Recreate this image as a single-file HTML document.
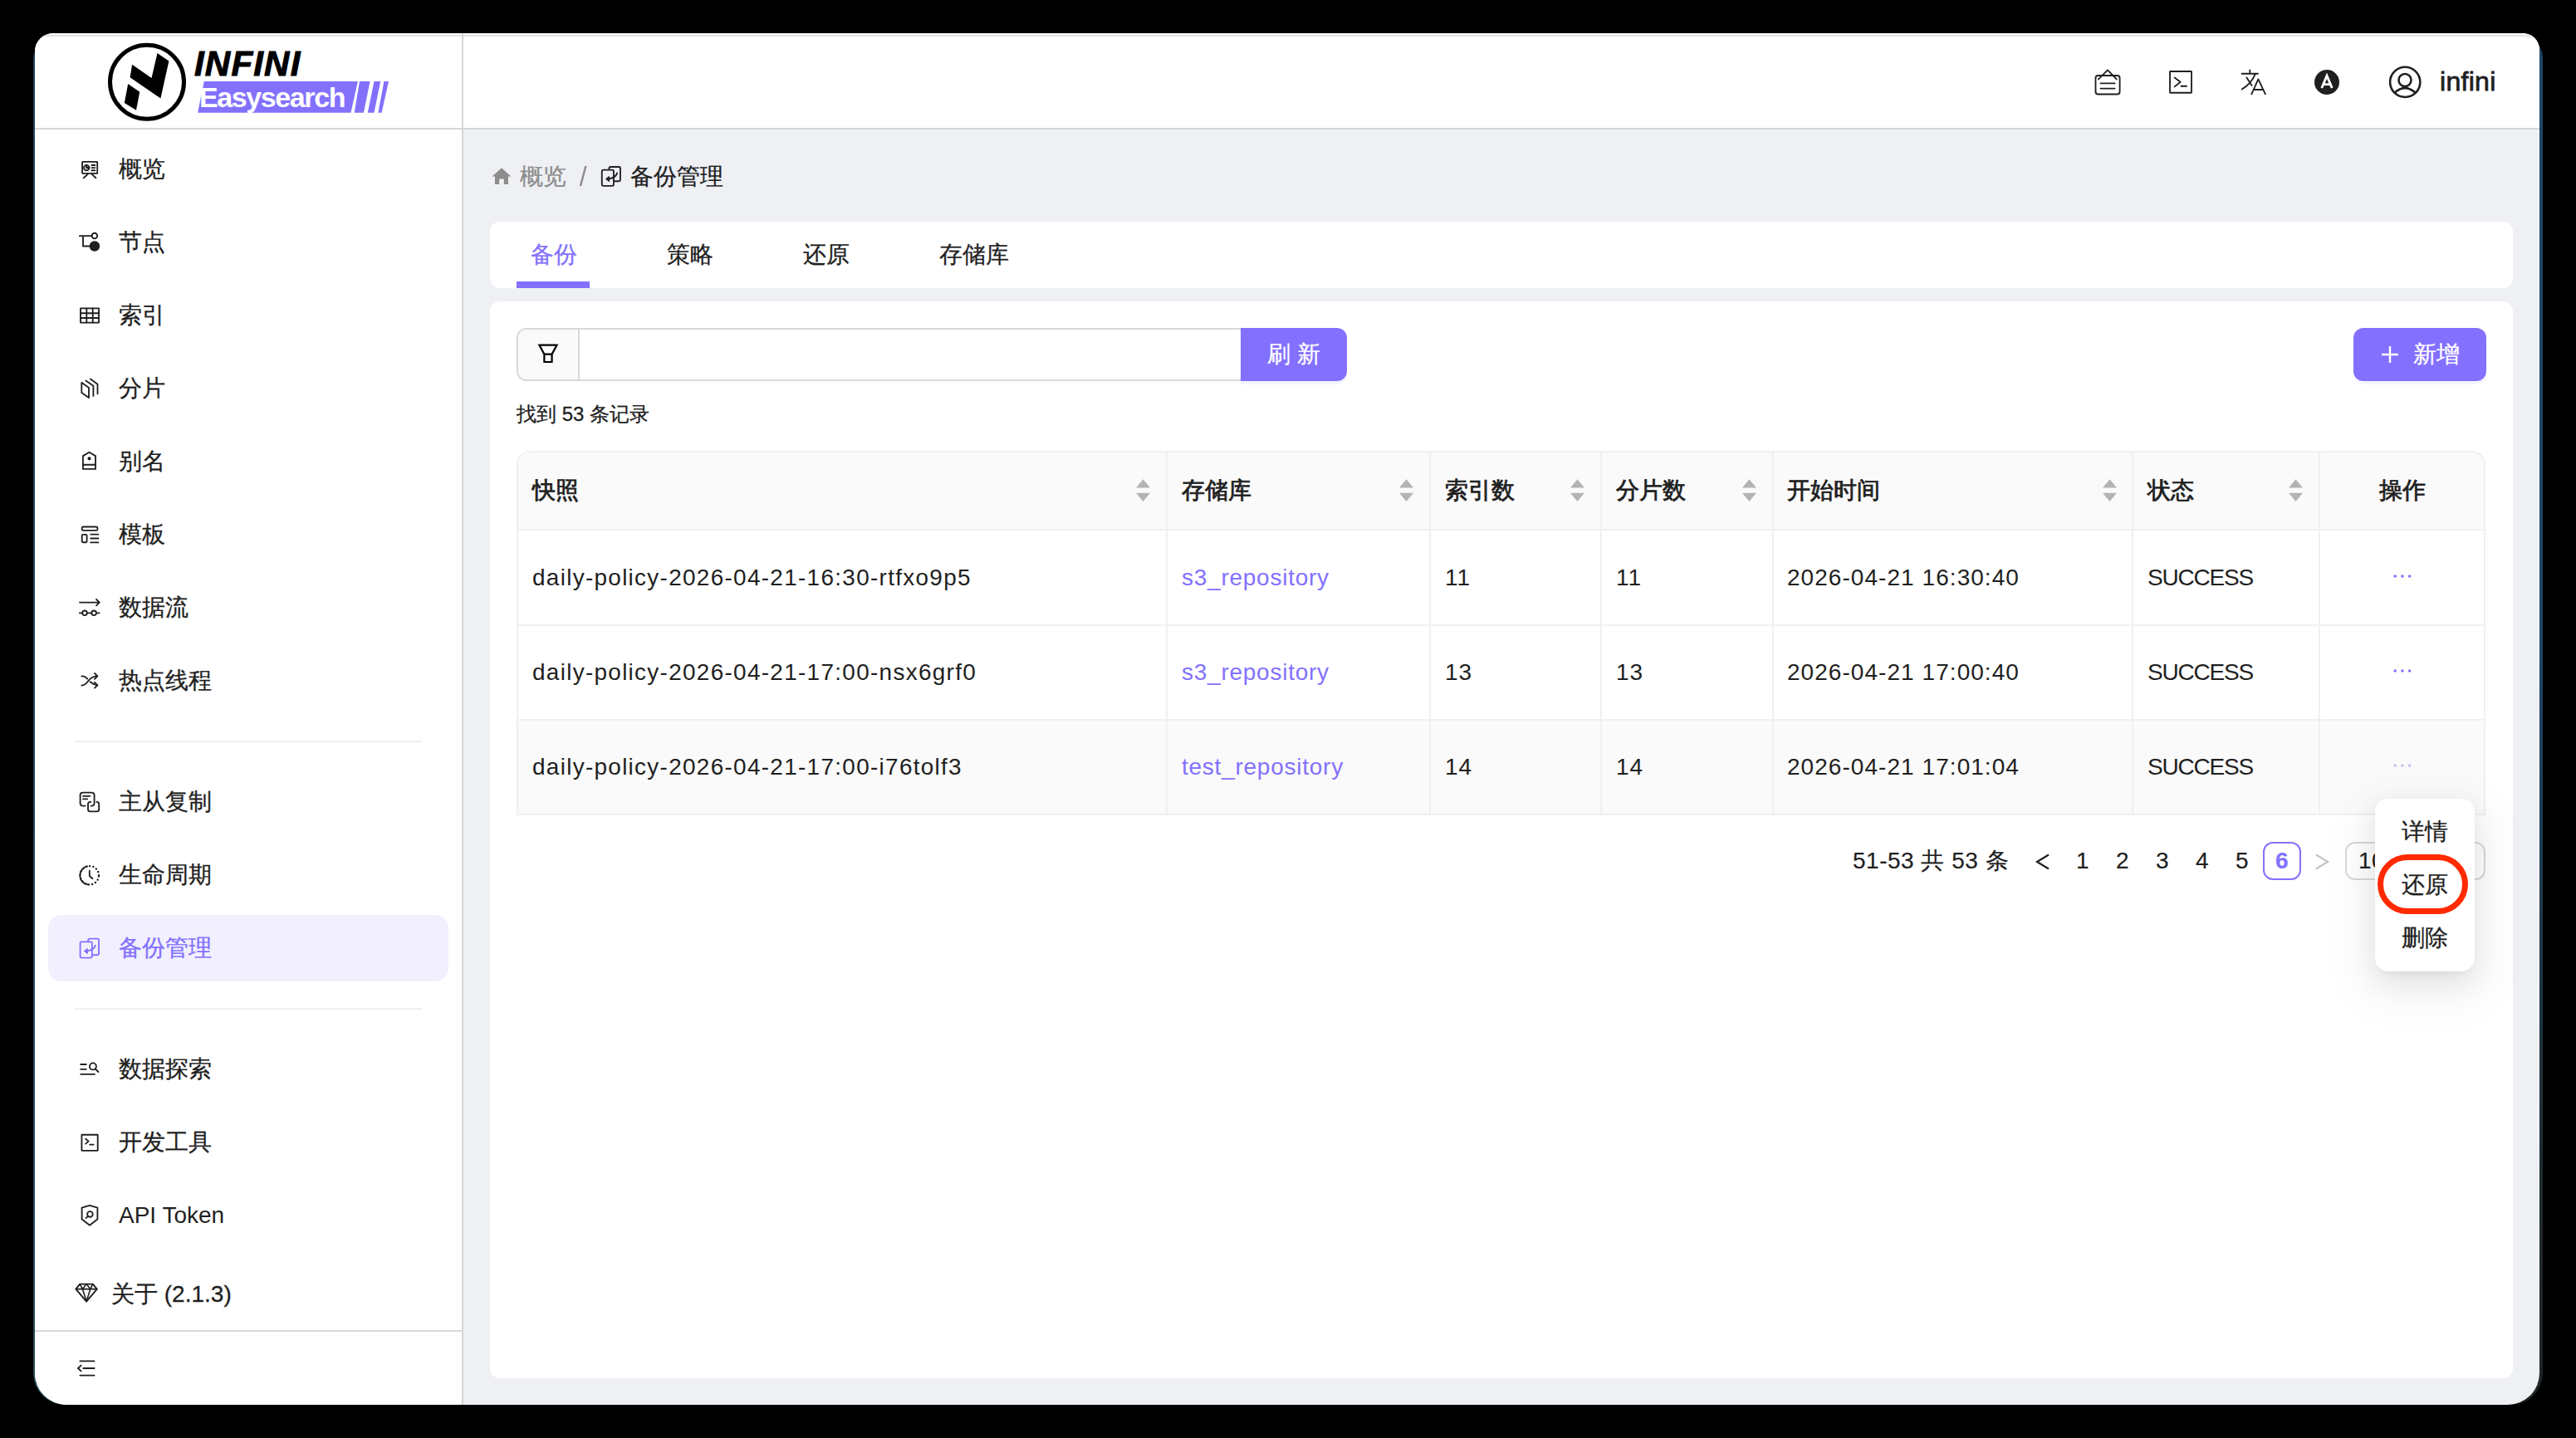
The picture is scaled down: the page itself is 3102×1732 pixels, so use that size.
<!DOCTYPE html>
<html><head><meta charset="utf-8">
<style>
html,body{margin:0;padding:0;}
body{width:3102px;height:1732px;background:#000;position:relative;overflow:hidden;font-family:"Liberation Sans",sans-serif;color:#1f1f1f;}
.a{position:absolute;}
.t{position:absolute;white-space:nowrap;line-height:40px;font-size:28px;-webkit-text-stroke:0.3px currentColor;}
#win{left:0;top:0;width:3102px;height:1732px;clip-path:inset(40px 44px 40px 42px round 22px 20px 38px 38px);background:#eef0f4;}
.ic{position:absolute;overflow:visible;}
.hd{font-weight:normal;}
.c0{letter-spacing:1.26px;}
.c1{letter-spacing:0.75px;}
.c2,.c3{letter-spacing:1px;}
.c4{letter-spacing:1.05px;}
.c5{letter-spacing:-1.2px;}
.c0,.c1,.c2,.c3,.c4,.c5{-webkit-text-stroke:0;}
.hd{-webkit-text-stroke:0.8px currentColor;}
.pg{letter-spacing:0.5px;-webkit-text-stroke:0.2px currentColor;}
.ic *{fill:none;stroke:#1f1f1f;stroke-width:1.85;stroke-linecap:round;stroke-linejoin:round;}
</style></head>
<body>
<div class="a" style="left:0;top:0;width:3102px;height:1732px;clip-path:inset(46px 46px 40px 40px round 26px 20px 38px 38px);background:linear-gradient(#1f4565 0%,#1f4565 55%,#24505a 100%);"></div><div class="a" style="left:0;top:0;width:3102px;height:1732px;clip-path:inset(44px 40px 40px 46px round 22px 26px 38px 38px);background:linear-gradient(#1f4565 0%,#1f4565 45%,#1f2a2c 85%,#1f2322 100%);"></div>
<div id="win" class="a">
  <!-- header -->
  <div class="a" style="left:42px;top:40px;width:3016px;height:114px;background:#fff;"></div>
  <div class="a" style="left:42px;top:42px;width:3016px;height:2px;background:#e0e2e1;"></div>
  <div class="a" style="left:42px;top:154px;width:3016px;height:2px;background:#d6d6d6;"></div>
  <!-- sidebar -->
  <div class="a" style="left:42px;top:156px;width:514px;height:1536px;background:#fff;"></div>
  <div class="a" style="left:556px;top:40px;width:2px;height:1652px;background:#d6d6d6;"></div>
  <!-- sidebar items -->
  <div class="a" style="left:58px;top:1102px;width:482px;height:80px;border-radius:16px;background:#f2f0fe;"></div>
  <div class="a" style="left:90px;top:892px;width:418px;height:2px;background:#efefef;"></div>
  <div class="a" style="left:90px;top:1214px;width:418px;height:2px;background:#efefef;"></div>
  <div class="a" style="left:42px;top:1602px;width:514px;height:2px;background:#d9d9d9;"></div>
  <div class="t" style="left:143px;top:184px;">概览</div>
  <div class="t" style="left:143px;top:272px;">节点</div>
  <div class="t" style="left:143px;top:360px;">索引</div>
  <div class="t" style="left:143px;top:448px;">分片</div>
  <div class="t" style="left:143px;top:536px;">别名</div>
  <div class="t" style="left:143px;top:624px;">模板</div>
  <div class="t" style="left:143px;top:712px;">数据流</div>
  <div class="t" style="left:143px;top:800px;">热点线程</div>
  <div class="t" style="left:143px;top:946px;">主从复制</div>
  <div class="t" style="left:143px;top:1034px;">生命周期</div>
  <div class="t" style="left:143px;top:1122px;color:#8371fd;">备份管理</div>
  <div class="t" style="left:143px;top:1268px;">数据探索</div>
  <div class="t" style="left:143px;top:1356px;">开发工具</div>
  <div class="t" style="left:143px;top:1444px;-webkit-text-stroke:0;">API Token</div>
  <div class="t" style="left:134px;top:1539px;">关于 (2.1.3)</div>
  <!-- icons -->
  <svg class="ic" style="left:85px;top:185px" width="50" height="40" viewBox="0 0 50 40">
    <rect x="14.1" y="9.9" width="18.1" height="14" rx="0.5"/>
    <path d="M15.8 29.3L20.6 24.9M25.6 24.9L30.4 29.3M25.4 14h4M25.4 17.1h4M25.4 20.2h4"/>
    <circle cx="19.2" cy="17.1" r="3.2"/><path d="M19.2 13.9v3.2h3.2" style="stroke-width:2.2"/>
  </svg>
  <svg class="ic" style="left:85px;top:272px" width="50" height="40" viewBox="0 0 50 40">
    <path d="M10.8 12.1H25.5M15 12.1V24.5H23"/>
    <circle cx="28.9" cy="12" r="3.3"/>
    <circle cx="28.9" cy="24.5" r="5.3" style="fill:#1f1f1f"/>
  </svg>
  <svg class="ic" style="left:85px;top:360px" width="50" height="40" viewBox="0 0 50 40">
    <rect x="12" y="11.4" width="22" height="17.2"/>
    <path d="M12 17.2H34M12 23H34M19.3 11.4V28.6M26.7 11.4V28.6"/>
  </svg>
  <svg class="ic" style="left:85px;top:448px" width="50" height="40" viewBox="0 0 50 40">
    <path d="M13.3 12.8L22 18.9V31.1L13.3 25Z"/>
    <path d="M18.4 10.6L27.4 16.7V28.9"/>
    <path d="M23.9 8.6L32.5 14.7V26.3"/>
  </svg>
  <svg class="ic" style="left:85px;top:536px" width="50" height="40" viewBox="0 0 50 40">
    <path d="M14.9 13.1L22.4 8.7L30 13.1V28.9H14.9Z"/>
    <path d="M14.9 23.7H30"/>
    <circle cx="22.5" cy="16.3" r="1.2" style="fill:#1f1f1f"/>
  </svg>
  <svg class="ic" style="left:85px;top:624px" width="50" height="40" viewBox="0 0 50 40">
    <rect x="13.7" y="10.5" width="18.7" height="4.4" rx="1.5"/>
    <rect x="13.7" y="19.8" width="5.9" height="9.4" rx="1.2"/>
    <path d="M24.2 19.6H33.4M24.2 24.5H33.4M24.2 29.4H33.4"/>
  </svg>
  <svg class="ic" style="left:85px;top:712px" width="50" height="40" viewBox="0 0 50 40">
    <path d="M11 13.6H34.6M31 9.8L34.8 13.6L31 17.4"/>
    <path d="M10.8 26.3H14.2M19.8 26.3H25.3M30.9 26.3H34.6"/>
    <circle cx="17" cy="26.3" r="2.8"/><circle cx="28.1" cy="26.3" r="2.8"/>
  </svg>
  <svg class="ic" style="left:85px;top:800px" width="50" height="40" viewBox="0 0 50 40">
    <path d="M13.3 14.4C16 14.2 18.6 15.6 20.2 17.6"/>
    <path d="M13.3 25.6C18 25.6 19.6 22.6 21.6 19.8C24 16.4 27 14.6 31.8 14.3"/>
    <path d="M23.6 21.2C25.6 22.8 28 24.6 31.8 25.2"/>
    <path d="M29 11L32.4 14.3L29 17.8M29 21.8L32.4 25.3L29 28.6"/>
  </svg>
  <svg class="ic" style="left:85px;top:946px" width="50" height="40" viewBox="0 0 50 40">
    <path d="M17.6 24.6H14.4A3 3 0 0 1 11.6 21.6V11.6A3 3 0 0 1 14.6 8.6H25.6A3 3 0 0 1 28.6 11.6V21.6A3 3 0 0 1 25.6 24.6H24.6"/>
    <path d="M15 12.8H23.2M15 16.4H20.2"/>
    <path d="M24.4 19.8H23.6A2.6 2.6 0 0 0 21 22.4V28.8A2.6 2.6 0 0 0 23.6 31.4H31.6A2.6 2.6 0 0 0 34.2 28.8V22.4A2.6 2.6 0 0 0 31.6 19.8H31.4"/>
  </svg>
  <svg class="ic" style="left:85px;top:1034px" width="50" height="40" viewBox="0 0 50 40">
    <path d="M20.2 9.4A11.2 11.2 0 0 0 20.4 31.4"/>
    <circle cx="22.8" cy="20.3" r="11.2" style="stroke-dasharray:0.1 4.2;stroke-dashoffset:-35.5;stroke-width:2.4"/>
    <path d="M22.8 14.6V21L26.4 24.3"/>
  </svg>
  <svg class="ic" style="left:85px;top:1122px" width="50" height="40" viewBox="0 0 50 40">
    <path style="stroke:#8371fd" d="M21.2 12.4V10.2A1.6 1.6 0 0 1 22.8 8.6H32.4A1.6 1.6 0 0 1 34 10.2V26.6A1.6 1.6 0 0 1 32.4 28.2H25.8"/>
    <rect style="stroke:#8371fd" x="11.6" y="12.4" width="14.2" height="19.2" rx="1.8"/>
    <path style="stroke:#8371fd" d="M29.8 16.6C28.6 20.4 26.4 22.6 20 23.4"/>
    <path d="M16.6 23.5L20.3 20.8V26.4Z" style="fill:#8371fd;stroke:#8371fd;stroke-width:1.2"/>
  </svg>
  <svg class="ic" style="left:85px;top:1268px" width="50" height="40" viewBox="0 0 50 40">
    <path d="M12.2 14H18.8M12.2 19.8H18.8M12.2 25.8H29"/>
    <circle cx="26.9" cy="16.4" r="4"/><path d="M29.8 19.5L33.4 23"/>
  </svg>
  <svg class="ic" style="left:85px;top:1356px" width="50" height="40" viewBox="0 0 50 40">
    <rect x="13.4" y="10.7" width="19.3" height="19.2" rx="0.4"/>
    <path d="M18.2 15.8L21.6 18.6L18.2 21.6M23.2 22.6H27.6"/>
  </svg>
  <svg class="ic" style="left:85px;top:1444px" width="50" height="40" viewBox="0 0 50 40">
    <path d="M13.6 10.6L23 7.9L32.4 10.6V24.4L23 31.8L13.6 24.4Z"/>
    <circle cx="23.4" cy="18.4" r="3.3"/><path d="M21 20.9L18.6 23.2"/>
  </svg>
  <svg class="ic" style="left:85px;top:1538px" width="50" height="40" viewBox="0 0 50 40">
    <path d="M6.4 14.6L11.2 8.6H26.8L31.8 14.6L19.1 29.6Z"/>
    <path d="M6.4 14.6H31.8M11.2 8.6L14.4 14.6L19.1 29.6L23.8 14.6L26.8 8.6M14.4 14.6L19.1 8.6L23.8 14.6" style="stroke-width:1.6"/>
  </svg>
  <svg class="ic" style="left:85px;top:1628px" width="50" height="40" viewBox="0 0 50 40">
    <path d="M11.4 11.4H28.6M15.4 20H28.6M11.4 28.6H28.6M12.6 16.6L9 20L12.6 23.4"/>
  </svg>
  <!-- logo -->
  <svg class="a" style="left:120px;top:45px" width="370" height="110" viewBox="120 45 370 110">
    <circle cx="177" cy="98.7" r="44.5" fill="none" stroke="#000" stroke-width="5"/>
    <path d="M189.45 63.9L203.4 73.6L193.4 118.6L156.6 93.2L159.1 77.8L182.5 93.9Z" fill="#000"/>
    <path d="M154.2 100.9L168.2 110.7L164 132.8L149.8 124Z" fill="#000"/>
    <path d="M245.8 98.1H430.9L422.5 135.8H238.1Z" fill="#8371fd"/>
    <path d="M433 98.1H445.6L437.9 135.8H426.7Z" fill="#8371fd"/>
    <path d="M450.5 98.1H458.2L450.5 135.8H442.8Z" fill="#8371fd"/>
    <path d="M462.4 98.1H468L459.6 135.8H455.4Z" fill="#8371fd"/>
  </svg>
  <div class="t" id="infini-logo" style="left:234px;top:52px;font-size:42px;line-height:50px;font-weight:bold;font-style:italic;color:#000;letter-spacing:1.2px;-webkit-text-stroke:1px #000;">INFINI</div>
  <div class="t" id="easy-logo" style="left:240px;top:97px;font-size:34px;line-height:40px;font-weight:bold;color:#fff;letter-spacing:-1.4px;-webkit-text-stroke:0;">Easysearch</div>
  <!-- header icons -->
  <svg class="ic" style="left:2500px;top:60px" width="530" height="80" viewBox="2500 60 530 80">
    <rect x="2523.5" y="91" width="29.1" height="22.5" rx="3"/>
    <path d="M2527 95.4L2538 84.4L2548.8 95.4M2529.5 100.4H2546.6M2529.5 106.6H2546.6"/>
    <rect x="2613" y="86" width="26" height="25.7" rx="0.5"/>
    <path d="M2618.7 93.4L2625.6 98.75L2618.7 104.4M2626.5 103.75H2633"/>
    <path d="M2699.7 88.75H2719M2709.3 84.3V88.75M2705.5 93.4L2711.6 103M2715.8 89.2Q2711 101 2699.7 107.5"/>
    <path d="M2711.3 113.3L2719.4 95.4L2727.9 113.3M2714 108H2725"/>
    <circle cx="2802" cy="99" r="15" style="fill:#1f1f1f;stroke:none"/>
    <path d="M2795.8 106L2802 91.2L2808.2 106M2798.2 101.6H2805.8" style="stroke:#fff;stroke-width:2.9;stroke-linecap:butt;stroke-linejoin:miter"/>
    <circle cx="2896.2" cy="98.9" r="18.1" style="stroke-width:2.6"/>
    <circle cx="2896" cy="96.5" r="7.5" style="stroke-width:2.6"/>
    <path d="M2883.6 111.6Q2896 100.5 2908.6 111.6" style="stroke-width:2.6"/>
  </svg>
  <div class="t" style="left:2938px;top:78px;font-size:32px;line-height:40px;letter-spacing:0.3px;-webkit-text-stroke:0.8px #1f1f1f;color:#1f1f1f;">infini</div>
  <!-- breadcrumb -->
  <svg class="a" style="left:588px;top:196px" width="32" height="32" viewBox="588 196 32 32">
    <path d="M604 202.2L615.4 212.6H612V222H606.8V215.6H601.2V222H596V212.6H592.6Z" fill="#8c8c8c"/>
  </svg>
  <div class="t" style="left:626px;top:193px;color:#8c8c8c;">概览</div>
  <svg class="a" style="left:690px;top:195px" width="24" height="34" viewBox="690 195 24 34"><path d="M705.4 200L699 224" stroke="#8c8c8c" stroke-width="2.4" fill="none"/></svg>
  <svg class="ic" style="left:718px;top:196px" width="36" height="34" viewBox="718 196 36 34">
    <path d="M733.5 204V202.6A1.6 1.6 0 0 1 735.1 201H745.4A1.6 1.6 0 0 1 747 202.6V216.6A1.6 1.6 0 0 1 745.4 218.2H739.4"/>
    <rect x="724.8" y="204.6" width="14.2" height="19.2" rx="1.8"/>
    <path d="M743.2 208.4C742 212.2 739.8 214.6 733.2 215.4"/>
    <path d="M729.8 215.5L733.5 212.8V218.4Z" style="fill:#1f1f1f;stroke-width:1.2"/>
  </svg>
  <div class="t" style="left:759px;top:193px;">备份管理</div>
  <!-- tabs card -->
  <div class="a" style="left:590px;top:267px;width:2436px;height:80px;border-radius:12px;background:#fff;"></div>
  <div class="t" style="left:639px;top:287px;color:#8371fd;">备份</div>
  <div class="t" style="left:803px;top:287px;">策略</div>
  <div class="t" style="left:967px;top:287px;">还原</div>
  <div class="t" style="left:1131px;top:287px;">存储库</div>
  <div class="a" style="left:622px;top:339px;width:88px;height:8px;background:#8371fd;"></div>
  <!-- main card -->
  <div class="a" style="left:590px;top:363px;width:2436px;height:1297px;border-radius:12px;background:#fff;"></div>
  <!-- search group -->
  <div class="a" style="left:622px;top:395px;width:872px;height:64px;box-sizing:border-box;border:2px solid #d9d9d9;border-right:none;border-radius:12px 0 0 12px;background:#fff;"></div>
  <div class="a" style="left:624px;top:397px;width:72px;height:60px;border-radius:10px 0 0 10px;background:#fafafa;"></div>
  <div class="a" style="left:696px;top:397px;width:2px;height:60px;background:#d9d9d9;"></div>
  <svg class="ic" style="left:640px;top:405px" width="40" height="40" viewBox="640 405 40 40">
    <path d="M649.4 415.6H670.6L664.6 426.6V436H655.4V426.6ZM655.4 426.6H664.6" style="stroke:#000;stroke-width:2.2;stroke-linejoin:miter;stroke-linecap:butt"/>
  </svg>
  <div class="a" style="left:1494px;top:395px;width:128px;height:64px;border-radius:0 12px 12px 0;background:#8470fe;box-shadow:0 4px 0 rgba(131,113,253,0.08);"></div>
  <div class="t" style="left:1526px;top:407px;color:#fff;letter-spacing:8px;">刷新</div>
  <div class="a" style="left:2834px;top:395px;width:160px;height:64px;border-radius:12px;background:#8470fe;box-shadow:0 4px 0 rgba(131,113,253,0.08);"></div>
  <svg class="a" style="left:2860px;top:415px" width="36" height="24" viewBox="2860 415 36 24">
    <path d="M2868 427H2888M2878 417V437" stroke="#fff" stroke-width="2.4" fill="none"/>
  </svg>
  <div class="t" style="left:2906px;top:407px;color:#fff;">新增</div>
  <div class="t" style="left:622px;top:479px;font-size:24px;">找到 53 条记录</div>
  <!-- table -->
  <div class="a" style="left:622px;top:543px;width:2371px;height:437px;box-sizing:border-box;border:2px solid #f0f0f0;border-bottom:none;border-radius:16px 16px 0 0;background:#fff;"></div>
  <div class="a" style="left:624px;top:545px;width:2367px;height:92px;border-radius:14px 14px 0 0;background:#fafafa;"></div>
  <div class="a" style="left:624px;top:866px;width:2367px;height:114px;background:#fafafa;"></div>
  <div class="a" style="left:622px;top:637px;width:2371px;height:2px;background:#f0f0f0;"></div>
  <div class="a" style="left:622px;top:752px;width:2371px;height:2px;background:#f0f0f0;"></div>
  <div class="a" style="left:622px;top:866px;width:2371px;height:2px;background:#f0f0f0;"></div>
  <div class="a" style="left:622px;top:980px;width:2371px;height:2px;background:#f0f0f0;"></div>
  <div class="a" style="left:1404px;top:545px;width:2px;height:435px;background:#f0f0f0;"></div>
  <div class="a" style="left:1721px;top:545px;width:2px;height:435px;background:#f0f0f0;"></div>
  <div class="a" style="left:1927px;top:545px;width:2px;height:435px;background:#f0f0f0;"></div>
  <div class="a" style="left:2134px;top:545px;width:2px;height:435px;background:#f0f0f0;"></div>
  <div class="a" style="left:2567px;top:545px;width:2px;height:435px;background:#f0f0f0;"></div>
  <div class="a" style="left:2792px;top:545px;width:2px;height:435px;background:#f0f0f0;"></div>
  <div class="t hd" style="left:641px;top:571px;">快照</div>
  <div class="t hd" style="left:1423px;top:571px;">存储库</div>
  <div class="t hd" style="left:1740px;top:571px;">索引数</div>
  <div class="t hd" style="left:1946px;top:571px;">分片数</div>
  <div class="t hd" style="left:2152px;top:571px;">开始时间</div>
  <div class="t hd" style="left:2586px;top:571px;">状态</div>
  <div class="t hd" style="left:2865px;top:571px;">操作</div>
  <svg class="a" style="left:1367px;top:576px" width="19" height="29" viewBox="0 0 19 29"><path d="M9.5 1.2L18 11.4H1Z M1 17.8H18L9.5 28Z" fill="#b3b3b3"/></svg>
  <svg class="a" style="left:1684px;top:576px" width="19" height="29" viewBox="0 0 19 29"><path d="M9.5 1.2L18 11.4H1Z M1 17.8H18L9.5 28Z" fill="#b3b3b3"/></svg>
  <svg class="a" style="left:1890px;top:576px" width="19" height="29" viewBox="0 0 19 29"><path d="M9.5 1.2L18 11.4H1Z M1 17.8H18L9.5 28Z" fill="#b3b3b3"/></svg>
  <svg class="a" style="left:2097px;top:576px" width="19" height="29" viewBox="0 0 19 29"><path d="M9.5 1.2L18 11.4H1Z M1 17.8H18L9.5 28Z" fill="#b3b3b3"/></svg>
  <svg class="a" style="left:2531px;top:576px" width="19" height="29" viewBox="0 0 19 29"><path d="M9.5 1.2L18 11.4H1Z M1 17.8H18L9.5 28Z" fill="#b3b3b3"/></svg>
  <svg class="a" style="left:2755px;top:576px" width="19" height="29" viewBox="0 0 19 29"><path d="M9.5 1.2L18 11.4H1Z M1 17.8H18L9.5 28Z" fill="#b3b3b3"/></svg>
  <div class="t c0" style="left:641px;top:676px;">daily-policy-2026-04-21-16:30-rtfxo9p5</div>
  <div class="t c1" style="left:1423px;top:676px;color:#8371fd;">s3_repository</div>
  <div class="t c2" style="left:1740px;top:676px;">11</div>
  <div class="t c3" style="left:1946px;top:676px;">11</div>
  <div class="t c4" style="left:2152px;top:676px;">2026-04-21 16:30:40</div>
  <div class="t c5" style="left:2586px;top:676px;">SUCCESS</div>
  <svg class="a" style="left:2880px;top:691px" width="26" height="8" viewBox="0 0 26 8"><circle cx="4.2" cy="3" r="1.8" fill="#8371fd"/><circle cx="12.9" cy="3" r="1.8" fill="#8371fd"/><circle cx="21.6" cy="3" r="1.8" fill="#8371fd"/></svg>
  <div class="t c0" style="left:641px;top:790px;">daily-policy-2026-04-21-17:00-nsx6grf0</div>
  <div class="t c1" style="left:1423px;top:790px;color:#8371fd;">s3_repository</div>
  <div class="t c2" style="left:1740px;top:790px;">13</div>
  <div class="t c3" style="left:1946px;top:790px;">13</div>
  <div class="t c4" style="left:2152px;top:790px;">2026-04-21 17:00:40</div>
  <div class="t c5" style="left:2586px;top:790px;">SUCCESS</div>
  <svg class="a" style="left:2880px;top:805px" width="26" height="8" viewBox="0 0 26 8"><circle cx="4.2" cy="3" r="1.8" fill="#8371fd"/><circle cx="12.9" cy="3" r="1.8" fill="#8371fd"/><circle cx="21.6" cy="3" r="1.8" fill="#8371fd"/></svg>
  <div class="t c0" style="left:641px;top:904px;">daily-policy-2026-04-21-17:00-i76tolf3</div>
  <div class="t c1" style="left:1423px;top:904px;color:#8371fd;">test_repository</div>
  <div class="t c2" style="left:1740px;top:904px;">14</div>
  <div class="t c3" style="left:1946px;top:904px;">14</div>
  <div class="t c4" style="left:2152px;top:904px;">2026-04-21 17:01:04</div>
  <div class="t c5" style="left:2586px;top:904px;">SUCCESS</div>
  <svg class="a" style="left:2880px;top:919px" width="26" height="8" viewBox="0 0 26 8"><circle cx="4.2" cy="3" r="1.8" fill="#c6bdfd"/><circle cx="12.9" cy="3" r="1.8" fill="#c6bdfd"/><circle cx="21.6" cy="3" r="1.8" fill="#c6bdfd"/></svg>
  <!-- pagination -->
  <div class="t pg" style="left:2231px;top:1017px;">51-53 共 53 条</div>
  <svg class="ic" style="left:2448px;top:1024px" width="24" height="28" viewBox="2448 1024 24 28"><path d="M2467 1029.5L2453 1038L2467 1046.5" style="stroke:#1f1f1f;stroke-width:2.2;stroke-linecap:butt;stroke-linejoin:miter"/></svg>
  <div class="t pg" style="left:2484px;top:1017px;width:48px;text-align:center;">1</div>
  <div class="t pg" style="left:2532px;top:1017px;width:48px;text-align:center;">2</div>
  <div class="t pg" style="left:2580px;top:1017px;width:48px;text-align:center;">3</div>
  <div class="t pg" style="left:2628px;top:1017px;width:48px;text-align:center;">4</div>
  <div class="t pg" style="left:2676px;top:1017px;width:48px;text-align:center;">5</div>
  <div class="a" style="left:2725px;top:1014px;width:46px;height:46px;box-sizing:border-box;border:2px solid #8371fd;border-radius:12px;"></div>
  <div class="t pg" style="left:2724px;top:1017px;width:48px;text-align:center;color:#8371fd;font-weight:bold;">6</div>
  <svg class="ic" style="left:2784px;top:1024px" width="24" height="28" viewBox="2784 1024 24 28"><path d="M2789 1029.5L2803 1038L2789 1046.5" style="stroke:#c4c4c4;stroke-width:2.2;stroke-linecap:butt;stroke-linejoin:miter"/></svg>
  <div class="a" style="left:2824px;top:1014px;width:169px;height:46px;box-sizing:border-box;border:2px solid #d9d9d9;border-radius:12px;background:#fff;"></div>
  <div class="t pg" style="left:2840px;top:1017px;">10 条/页</div>
  <!-- dropdown -->
  <div class="a" style="left:2860px;top:962px;width:120px;height:208px;border-radius:16px;background:#fff;box-shadow:0 12px 32px 0 rgba(0,0,0,.08),0 6px 12px -8px rgba(0,0,0,.12),0 18px 56px 16px rgba(0,0,0,.05);"></div>
  <div class="t" style="left:2892px;top:982px;">详情</div>
  <div class="t" style="left:2892px;top:1046px;">还原</div>
  <div class="t" style="left:2892px;top:1110px;">删除</div>
  <div class="a" style="left:2863px;top:1029px;width:109px;height:72px;box-sizing:border-box;border:7px solid #ff2a00;border-radius:36px;"></div>
</div>
</body></html>
